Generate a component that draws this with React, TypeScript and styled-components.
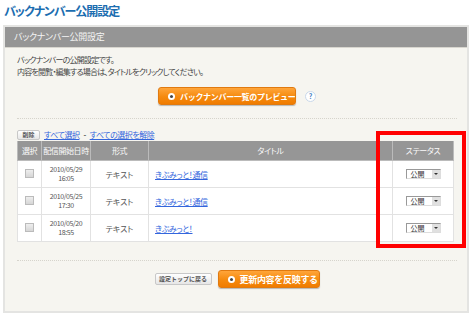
import styled, { createGlobalStyle } from "styled-components";

const GlobalStyle = createGlobalStyle`
  body {
    margin: 0;
    background: #fff;
    font-family: "Noto Sans CJK JP", "Noto Sans", sans-serif;
    font-feature-settings: "palt";
  }
`;

const Page = styled.div`
  position: relative;
  width: 473px;
  height: 317px;
  padding: 3px 4px 0 3px;
  box-sizing: border-box;
`;

const Title = styled.h1`
  margin: 0 0 6px 1px;
  height: 16px;
  font-size: 12px;
  line-height: 16px;
  letter-spacing: -1px;
  font-weight: bold;
  color: #1b6db0;
`;

const Panel = styled.div`
  width: 466px;
  height: 288px;
  box-sizing: border-box;
  border: 2px solid #e4e4e2;
  background: #f6f5f0;
`;

const PanelHeader = styled.div`
  height: 20px;
  line-height: 20px;
  background: #959595;
  border-bottom: 1px solid #d8d6cf;
  padding-left: 9px;
  font-size: 9px;
  letter-spacing: -0.3px;
  color: #f4f4f4;
`;

const PanelBody = styled.div`
  padding: 6px 10px 0 12px;
`;

const Intro = styled.p`
  margin: 0;
  font-size: 8px;
  line-height: 12px;
  letter-spacing: -0.8px;
  color: #444;
`;

const Center = styled.div<{ $top: number }>`
  display: flex;
  justify-content: center;
  align-items: center;
  gap: 6px;
  margin-top: ${(p) => p.$top}px;
`;

const OrangeButton = styled.button<{ $w: number; $h: number; $size: number }>`
  display: flex;
  align-items: center;
  gap: 5px;
  width: ${(p) => p.$w}px;
  height: ${(p) => p.$h}px;
  padding: 0 0 0 9px;
  border: 1px solid #e07a10;
  border-radius: 3px;
  background: linear-gradient(#ffa53a, #f58a0e 55%, #f07c00);
  box-shadow: 0 1px 1px rgba(0, 0, 0, 0.25);
  color: #fff;
  font-family: inherit;
  font-size: ${(p) => p.$size}px;
  letter-spacing: -0.3px;
  font-weight: bold;
  white-space: nowrap;
  overflow: hidden;
`;

const Dot = styled.span`
  width: 7px;
  height: 7px;
  border-radius: 50%;
  background: #fff;
  display: flex;
  align-items: center;
  justify-content: center;
  flex: none;

  &::after {
    content: "";
    width: 3px;
    height: 3px;
    border-radius: 50%;
    background: #444;
  }
`;

const Help = styled.span`
  width: 9px;
  height: 9px;
  margin-left: 3px;
  border-radius: 50%;
  border: 1px solid #c9d8ea;
  background: #fff;
  color: #3b78c0;
  font-size: 7px;
  font-weight: bold;
  line-height: 9px;
  text-align: center;
`;

const Dotted = styled.div<{ $top: number }>`
  margin-top: ${(p) => p.$top}px;
  border-top: 1px dotted #d6d4cc;
`;

const Toolbar = styled.div`
  display: flex;
  align-items: center;
  gap: 4px;
  margin-top: 10px;
  height: 11px;
  font-size: 8px;
  letter-spacing: -0.5px;
`;

const SmallButton = styled.button<{ $w: number; $h: number }>`
  width: ${(p) => p.$w}px;
  height: ${(p) => p.$h}px;
  padding: 0;
  border: 1px solid #c8c8c8;
  border-radius: 2px;
  background: linear-gradient(#fff, #e6e6e6);
  font-family: inherit;
  font-size: 6px;
  font-weight: bold;
  color: #555;
  line-height: 8px;
  white-space: nowrap;
`;

const Link = styled.a`
  color: #3366dd;
  text-decoration: underline;
`;

const Table = styled.table`
  margin-top: 1px;
  width: 437px;
  border-collapse: collapse;
  background: #fff;
  font-size: 8px;
  color: #555;
  text-align: center;

  th {
    height: 19px;
    padding: 0;
    background: #969696;
    color: #fafafa;
    font-weight: normal;
    letter-spacing: -0.4px;
    border: 1px solid #bbb;
    border-top: none;
  }

  td {
    height: 26px;
    padding: 0;
    border: 1px solid #e2e2e2;
    line-height: 9px;
  }
`;

const DateCell = styled.td`
  font-size: 7px;
  letter-spacing: -0.4px;
`;

const TitleCell = styled.td`
  text-align: left;
  padding-left: 6px !important;
  letter-spacing: -0.4px;
`;

const Check = styled.span`
  display: inline-block;
  width: 7px;
  height: 7px;
  border: 1px solid #bbb;
  background: linear-gradient(#eee, #d6d6d6);
`;

const Select = styled.span`
  display: inline-flex;
  align-items: center;
  justify-content: space-between;
  width: 35px;
  height: 10px;
  box-sizing: border-box;
  border: 1px solid #999;
  border-right-color: #ddd;
  border-bottom-color: #ddd;
  background: #fff;
  padding-left: 4px;
  font-size: 7px;
  color: #333;
`;

const Arrow = styled.span`
  width: 8px;
  height: 8px;
  background: #e0e0e0;
  display: flex;
  align-items: center;
  justify-content: center;

  &::after {
    content: "";
    border-left: 2px solid transparent;
    border-right: 2px solid transparent;
    border-top: 2px solid #333;
  }
`;

const Highlight = styled.div`
  position: absolute;
  left: 376px;
  top: 131px;
  width: 90px;
  height: 117px;
  box-sizing: border-box;
  border: 4px solid #ff0000;
  pointer-events: none;
`;

const rows = [
  { date: "2010/05/29", time: "16:05", title: "きぶみっと！通信" },
  { date: "2010/05/25", time: "17:30", title: "きぶみっと！通信" },
  { date: "2010/05/20", time: "18:55", title: "きぶみっと！" },
];

export default function App() {
  return (
    <Page>
      <GlobalStyle />
      <Title>バックナンバー公開設定</Title>
      <Panel>
        <PanelHeader>バックナンバー公開設定</PanelHeader>
        <PanelBody>
          <Intro>バックナンバーの公開設定です。</Intro>
          <Intro>内容を閲覧・編集する場合は、タイトルをクリックしてください。</Intro>
          <Center $top={9}>
            <OrangeButton $w={138} $h={18} $size={8}>
              <Dot />
              バックナンバー一覧のプレビュー
            </OrangeButton>
            <Help>?</Help>
          </Center>
          <Dotted $top={13} />
          <Toolbar>
            <SmallButton $w={23} $h={10}>削除</SmallButton>
            <Link>すべて選択</Link>
            <span>-</span>
            <Link>すべての選択を解除</Link>
          </Toolbar>
          <Table>
            <thead>
              <tr>
                <th style={{ width: 23 }}>選択</th>
                <th style={{ width: 48 }}>配信開始日時</th>
                <th style={{ width: 57 }}>形式</th>
                <th>タイトル</th>
                <th style={{ width: 60 }}>ステータス</th>
              </tr>
            </thead>
            <tbody>
              {rows.map((r) => (
                <tr key={r.date}>
                  <td>
                    <Check />
                  </td>
                  <DateCell>
                    {r.date}
                    <br />
                    {r.time}
                  </DateCell>
                  <td>テキスト</td>
                  <TitleCell>
                    <Link>{r.title}</Link>
                  </TitleCell>
                  <td>
                    <Select>
                      公開
                      <Arrow />
                    </Select>
                  </td>
                </tr>
              ))}
            </tbody>
          </Table>
          <Dotted $top={18} />
          <Center $top={9}>
            <SmallButton $w={57} $h={12}>
              設定トップに戻る
            </SmallButton>
            <OrangeButton $w={102} $h={18} $size={9}>
              <Dot />
              更新内容を反映する
            </OrangeButton>
          </Center>
        </PanelBody>
      </Panel>
      <Highlight />
    </Page>
  );
}
